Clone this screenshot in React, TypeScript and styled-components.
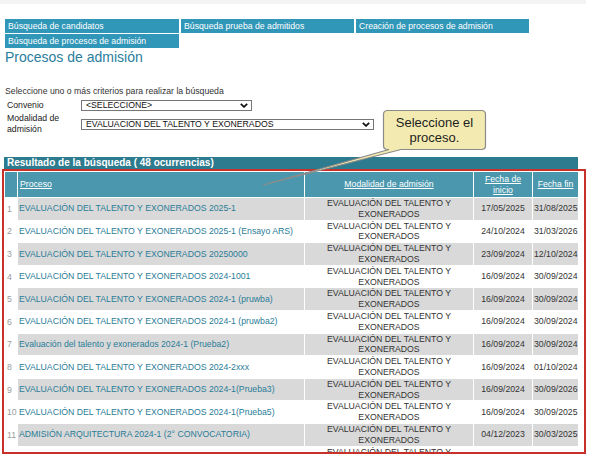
import styled, { createGlobalStyle } from "styled-components";

const GlobalStyle = createGlobalStyle`
  body {
    margin: 0;
    background: #ffffff;
    font-family: "Liberation Sans", Arial, sans-serif;
  }
`;

const Page = styled.div`
  position: relative;
  width: 596px;
  height: 456px;
  overflow: hidden;
  font-size: 8.7px;
  color: #333333;
`;

const TopStrip = styled.div`
  width: 586px;
  height: 4px;
  background-color: #f4f4f4;
`;

const Tabs = styled.div`
  display: grid;
  grid-template-columns: 174px 173px 173px;
  column-gap: 2px;
  row-gap: 1px;
  margin: 15px 0 0 5px;
`;

const Tab = styled.div`
  height: 14px;
  line-height: 14px;
  padding-left: 3px;
  background-color: #3197b8;
  color: #ffffff;
  white-space: nowrap;
`;

const Title = styled.h1`
  margin: 1px 0 0 5px;
  font-size: 14px;
  line-height: 16px;
  font-weight: normal;
  color: #2a7d9d;
`;

const Hint = styled.div`
  margin: 21px 0 0 5px;
  line-height: 11px;
`;

const FormGrid = styled.div`
  display: grid;
  grid-template-columns: 74px auto;
  align-items: center;
  margin: 2px 0 0 7px;
`;

const Label = styled.div`
  line-height: 11px;
  color: #222222;
  padding: 1px 0;
`;

const Select = styled.div<{ $width: number }>`
  width: ${(p) => p.$width}px;
  height: 11px;
  box-sizing: border-box;
  border: 1px solid #767676;
  display: flex;
  align-items: center;
  justify-content: space-between;
  padding: 0 3px 0 4px;
  color: #111111;
  line-height: 9px;
  background: #ffffff;
`;

const ResultBar = styled.div`
  margin: 21px 0 0 4px;
  width: 571px;
  height: 12px;
  line-height: 12px;
  padding-left: 3px;
  background-color: #2c7b8e;
  color: #ffffff;
  font-size: 10px;
  font-weight: bold;
`;

const ResultBox = styled.div`
  margin-left: 2px;
  width: 584px;
  height: 285px;
  box-sizing: border-box;
  border: 2px solid #c8312a;
  overflow: hidden;
`;

const Table = styled.table`
  width: 575px;
  table-layout: fixed;
  border-collapse: separate;
  border-spacing: 1px;
  font-size: 8.7px;
`;

const HeadCell = styled.th<{ $align?: string }>`
  height: 25px;
  padding: 0 2px;
  background-color: #4b98ae;
  color: #ffffff;
  font-weight: normal;
  text-align: ${(p) => p.$align || "center"};
  line-height: 11px;
  text-decoration: underline;
  vertical-align: middle;
`;

const NumCell = styled.td`
  padding: 0 0 0 2px;
  color: #9a9a9a;
  vertical-align: middle;
`;

const Cell = styled.td<{ $shade: boolean; $align?: string; $link?: boolean }>`
  height: 21.6px;
  padding: 0 1px;
  background-color: ${(p) => (p.$shade ? "#d9d9d9" : "#ffffff")};
  color: ${(p) => (p.$link ? "#2a7c98" : "#333333")};
  text-align: ${(p) => p.$align || "left"};
  line-height: 10.8px;
  vertical-align: middle;
  white-space: ${(p) => (p.$link ? "nowrap" : "normal")};
  overflow: hidden;
`;

const CalloutShape = styled.svg`
  position: absolute;
  left: 255px;
  top: 105px;
`;

const CalloutText = styled.div`
  position: absolute;
  left: 384px;
  top: 111px;
  width: 101px;
  height: 38px;
  display: flex;
  align-items: center;
  justify-content: center;
  text-align: center;
  font-size: 13px;
  line-height: 15px;
  color: #1e1e1e;
`;

function Chevron() {
  return (
    <svg width="8" height="5" viewBox="0 0 8 5">
      <path d="M0.8 0.8 L4 3.9 L7.2 0.8" fill="none" stroke="#111" strokeWidth="1.7" />
    </svg>
  );
}

const MODALIDAD = "EVALUACIÓN DEL TALENTO Y EXONERADOS";

const rows = [
  ["EVALUACIÓN DEL TALENTO Y EXONERADOS 2025-1", "17/05/2025", "31/08/2025"],
  ["EVALUACIÓN DEL TALENTO Y EXONERADOS 2025-1 (Ensayo ARS)", "24/10/2024", "31/03/2026"],
  ["EVALUACIÓN DEL TALENTO Y EXONERADOS 20250000", "23/09/2024", "12/10/2024"],
  ["EVALUACIÓN DEL TALENTO Y EXONERADOS 2024-1001", "16/09/2024", "30/09/2024"],
  ["EVALUACIÓN DEL TALENTO Y EXONERADOS 2024-1 (pruwba)", "16/09/2024", "30/09/2024"],
  ["EVALUACIÓN DEL TALENTO Y EXONERADOS 2024-1 (pruwba2)", "16/09/2024", "30/09/2024"],
  ["Evaluación del talento y exonerados 2024-1 (Prueba2)", "16/09/2024", "30/09/2024"],
  ["EVALUACIÓN DEL TALENTO Y EXONERADOS 2024-2xxx", "16/09/2024", "01/10/2024"],
  ["EVALUACIÓN DEL TALENTO Y EXONERADOS 2024-1(Prueba3)", "16/09/2024", "30/09/2026"],
  ["EVALUACIÓN DEL TALENTO Y EXONERADOS 2024-1(Prueba5)", "16/09/2024", "30/09/2025"],
  ["ADMISIÓN ARQUITECTURA 2024-1 (2° CONVOCATORIA)", "04/12/2023", "30/03/2025"],
  ["EVALUACIÓN DEL TALENTO Y EXONERADOS 2024-1 C", "05/09/2023", "04/09/2024"],
];

function App() {
  return (
    <Page>
      <GlobalStyle />
      <TopStrip />
      <Tabs>
        <Tab>Búsqueda de candidatos</Tab>
        <Tab>Búsqueda prueba de admitidos</Tab>
        <Tab>Creación de procesos de admisión</Tab>
        <Tab>Búsqueda de procesos de admisión</Tab>
      </Tabs>
      <Title>Procesos de admisión</Title>
      <Hint>Seleccione uno o más criterios para realizar la búsqueda</Hint>
      <FormGrid>
        <Label>Convenio</Label>
        <Select $width={171}>
          <span>&lt;SELECCIONE&gt;</span>
          <Chevron />
        </Select>
        <Label>
          Modalidad de
          <br />
          admisión
        </Label>
        <Select $width={293}>
          <span>EVALUACION DEL TALENTO Y EXONERADOS</span>
          <Chevron />
        </Select>
      </FormGrid>
      <ResultBar>Resultado de la búsqueda ( 48 ocurrencias)</ResultBar>
      <ResultBox>
        <Table>
          <colgroup>
            <col style={{ width: 12 }} />
            <col style={{ width: 286 }} />
            <col style={{ width: 168 }} />
            <col style={{ width: 58 }} />
            <col style={{ width: 45 }} />
          </colgroup>
          <thead>
            <tr>
              <HeadCell />
              <HeadCell $align="left">Proceso</HeadCell>
              <HeadCell>Modalidad de admisión</HeadCell>
              <HeadCell>Fecha de inicio</HeadCell>
              <HeadCell>Fecha fin</HeadCell>
            </tr>
          </thead>
          <tbody>
            {rows.map((r, i) => {
              const shade = i % 2 === 0;
              return (
                <tr key={i}>
                  <NumCell>{i + 1}</NumCell>
                  <Cell $shade={shade} $link>
                    {r[0]}
                  </Cell>
                  <Cell $shade={shade} $align="center">
                    {MODALIDAD}
                  </Cell>
                  <Cell $shade={shade} $align="center">
                    {r[1]}
                  </Cell>
                  <Cell $shade={shade} $align="center">
                    {r[2]}
                  </Cell>
                </tr>
              );
            })}
          </tbody>
        </Table>
      </ResultBox>
      <CalloutShape width="240" height="90" viewBox="255 105 240 90">
        <path
          d="M387.5 110.5 H481.5 Q485.5 110.5 485.5 114.5 V145.5 Q485.5 149.5 481.5 149.5 H401 L263 185 L389 149.5 H387.5 Q383.5 149.5 383.5 145.5 V114.5 Q383.5 110.5 387.5 110.5 Z"
          fill="#f2eab0"
          stroke="#8a8a8a"
          strokeWidth="1.2"
        />
      </CalloutShape>
      <CalloutText>
        Seleccione el
        <br />
        proceso.
      </CalloutText>
    </Page>
  );
}

export default App;
